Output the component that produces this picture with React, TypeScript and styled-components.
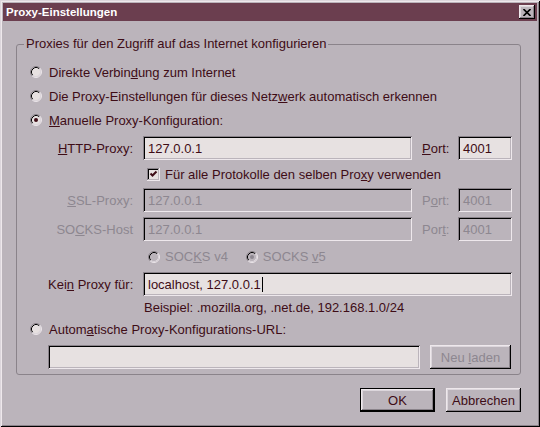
import styled, { createGlobalStyle } from "styled-components"

const FACE = "#bbb4bb"
const LIGHT = "#dcd6dc"
const HIGHLIGHT = "#eee8ec"
const SHADOW = "#8a838a"
const DARK = "#000"
const TEXT = "#3e0c16"
const DISABLED = "#8d8790"
const FIELD = "#e7e1e1"

const GlobalStyle = createGlobalStyle`
  html, body {
    margin: 0;
    padding: 0;
    background: ${FACE};
  }
  body {
    font-family: "Liberation Sans", Arial, sans-serif;
    font-size: 13px;
    color: ${TEXT};
  }
`

const Window = styled.div`
  width: 540px;
  height: 427px;
  box-sizing: border-box;
  padding: 3px;
  background: ${FACE};
  display: flex;
  flex-direction: column;
  box-shadow: inset 1px 1px ${LIGHT}, inset -1px -1px ${DARK},
    inset 2px 2px ${HIGHLIGHT}, inset -2px -2px ${SHADOW};
`

const TitleBar = styled.div`
  height: 18px;
  background: #6b3e4f;
  display: flex;
  align-items: center;
  justify-content: space-between;
  padding: 0 2px 0 3px;
`

const TitleText = styled.span`
  color: #fff;
  font-weight: bold;
  font-size: 11.5px;
`

const CloseButton = styled.div`
  width: 16px;
  height: 14px;
  box-sizing: border-box;
  background: ${FACE};
  display: flex;
  align-items: center;
  justify-content: center;
  box-shadow: inset -1px -1px ${DARK}, inset 1px 1px ${HIGHLIGHT},
    inset -2px -2px ${SHADOW}, inset 2px 2px ${LIGHT};
`

const Body = styled.div`
  flex: 1;
  padding: 15px 16px 0 13px;
  display: flex;
  flex-direction: column;
`

const Group = styled.fieldset`
  margin: 0;
  padding: 0 0 5px 0;
  min-width: 0;
  border: 1px solid ${SHADOW};
  border-radius: 3px;
`

const Legend = styled.legend`
  margin-left: 7px;
  padding: 0 2px;
  line-height: 16px;
`

const RadioRow = styled.div<{ $h: number; $top?: number }>`
  display: flex;
  align-items: center;
  gap: 7px;
  height: ${p => p.$h}px;
  margin-top: ${p => p.$top ?? 0}px;
  padding-left: 13px;
`

const Settings = styled.div`
  margin-left: 31px;
  margin-top: 4px;
  display: flex;
  flex-direction: column;
`

const FieldRow = styled.div<{ $top?: number }>`
  display: grid;
  grid-template-columns: 85px 269px 26px 54px;
  column-gap: 10px;
  align-items: center;
  height: 24px;
  margin-top: ${p => p.$top ?? 0}px;
`

const Label = styled.span<{ $disabled?: boolean; $right?: boolean }>`
  color: ${p => (p.$disabled ? DISABLED : TEXT)};
  text-align: ${p => (p.$right ? "right" : "left")};
  white-space: nowrap;
`

const Key = styled.span`
  text-decoration: underline;
  text-underline-offset: 1px;
`

const TextBox = styled.div<{ $disabled?: boolean; $span?: boolean }>`
  height: 24px;
  box-sizing: border-box;
  padding: 0 5px;
  display: flex;
  align-items: center;
  white-space: nowrap;
  background: ${p => (p.$disabled ? FACE : FIELD)};
  color: ${p => (p.$disabled ? DISABLED : TEXT)};
  grid-column: ${p => (p.$span ? "2 / 5" : "auto")};
  box-shadow: inset 1px 1px ${SHADOW}, inset -1px -1px ${HIGHLIGHT},
    inset 2px 2px ${DARK}, inset -2px -2px ${FACE};
`

const Caret = styled.span`
  display: inline-block;
  width: 1px;
  height: 15px;
  background: ${DARK};
  margin-left: 1px;
`

const IndentRow = styled.div<{ $h: number; $indent: number; $gap?: number }>`
  display: flex;
  align-items: center;
  height: ${p => p.$h}px;
  padding-left: ${p => p.$indent}px;
  gap: ${p => p.$gap ?? 5}px;
`

const Option = styled.label`
  display: flex;
  align-items: center;
  gap: 5px;
`

const UrlRow = styled.div`
  display: flex;
  gap: 10px;
  margin-top: 5px;
  padding-left: 31px;
`

const UrlBox = styled(TextBox)`
  width: 372px;
`

const Button = styled.div<{ $w: number; $default?: boolean; $disabled?: boolean }>`
  width: ${p => p.$w}px;
  height: 24px;
  box-sizing: border-box;
  background: ${FACE};
  display: flex;
  align-items: center;
  justify-content: center;
  color: ${p => (p.$disabled ? DISABLED : TEXT)};
  border: ${p => (p.$default ? `1px solid ${DARK}` : "none")};
  box-shadow: inset -1px -1px ${DARK}, inset 1px 1px ${HIGHLIGHT},
    inset -2px -2px ${SHADOW}, inset 2px 2px ${LIGHT};
`

const ButtonBar = styled.div`
  display: flex;
  justify-content: flex-end;
  gap: 11px;
  margin-top: 13px;
`

const Radio = ({ checked, disabled }: { checked?: boolean; disabled?: boolean }) => (
  <svg width="12" height="12" viewBox="0 0 12 12">
    <circle cx="6" cy="6" r="5" fill={disabled ? FACE : FIELD} />
    <path d="M2.11 9.89 A5.5 5.5 0 0 1 9.89 2.11" fill="none" stroke={SHADOW} />
    <path d="M9.89 2.11 A5.5 5.5 0 0 1 2.11 9.89" fill="none" stroke={HIGHLIGHT} />
    <path d="M2.82 9.18 A4.5 4.5 0 0 1 9.18 2.82" fill="none" stroke={DARK} />
    <path d="M9.18 2.82 A4.5 4.5 0 0 1 2.82 9.18" fill="none" stroke={LIGHT} />
    {checked && <circle cx="6" cy="6" r="2" fill={disabled ? DISABLED : TEXT} />}
  </svg>
)

const Checkbox = () => (
  <svg width="13" height="13" viewBox="0 0 13 13">
    <rect x="0" y="0" width="13" height="13" fill={HIGHLIGHT} />
    <rect x="0" y="0" width="12" height="12" fill={SHADOW} />
    <rect x="1" y="1" width="11" height="11" fill={FACE} />
    <rect x="1" y="1" width="10" height="10" fill={DARK} />
    <rect x="2" y="2" width="9" height="9" fill={FIELD} />
    <path d="M3.5 5.5 L5.5 7.5 L9.5 3.5" fill="none" stroke={TEXT} strokeWidth="2" />
  </svg>
)

const CloseIcon = () => (
  <svg width="8" height="7" viewBox="0 0 8 7">
    <path d="M0.5 0 L7.5 7 M7.5 0 L0.5 7" stroke="#000" strokeWidth="1.6" />
  </svg>
)

export default function App() {
  return (
    <>
      <GlobalStyle />
      <Window>
        <TitleBar>
          <TitleText>Proxy-Einstellungen</TitleText>
          <CloseButton>
            <CloseIcon />
          </CloseButton>
        </TitleBar>
        <Body>
          <Group>
            <Legend>Proxies für den Zugriff auf das Internet konfigurieren</Legend>
            <RadioRow $h={24} $top={8}>
              <Radio />
              <Label>
                Direkte Verbin<Key>d</Key>ung zum Internet
              </Label>
            </RadioRow>
            <RadioRow $h={24}>
              <Radio />
              <Label>
                Die Proxy-Einstellungen für dieses Netz<Key>w</Key>erk automatisch erkennen
              </Label>
            </RadioRow>
            <RadioRow $h={24}>
              <Radio checked />
              <Label>
                <Key>M</Key>anuelle Proxy-Konfiguration:
              </Label>
            </RadioRow>

            <Settings>
              <FieldRow>
                <Label $right>
                  <Key>H</Key>TTP-Proxy:
                </Label>
                <TextBox>127.0.0.1</TextBox>
                <Label>
                  <Key>P</Key>ort:
                </Label>
                <TextBox>4001</TextBox>
              </FieldRow>

              <IndentRow $h={28} $indent={99}>
                <Checkbox />
                <Label>
                  Für alle Protokolle den selben Pro<Key>x</Key>y verwenden
                </Label>
              </IndentRow>

              <FieldRow>
                <Label $right $disabled>
                  <Key>S</Key>SL-Proxy:
                </Label>
                <TextBox $disabled>127.0.0.1</TextBox>
                <Label $disabled>
                  P<Key>o</Key>rt:
                </Label>
                <TextBox $disabled>4001</TextBox>
              </FieldRow>

              <FieldRow $top={5}>
                <Label $right $disabled>
                  SO<Key>C</Key>KS-Host
                </Label>
                <TextBox $disabled>127.0.0.1</TextBox>
                <Label $disabled>
                  Por<Key>t</Key>:
                </Label>
                <TextBox $disabled>4001</TextBox>
              </FieldRow>

              <IndentRow $h={31} $indent={100} $gap={18}>
                <Option>
                  <Radio disabled />
                  <Label $disabled>
                    SOC<Key>K</Key>S v4
                  </Label>
                </Option>
                <Option>
                  <Radio checked disabled />
                  <Label $disabled>
                    SOCKS <Key>v</Key>5
                  </Label>
                </Option>
              </IndentRow>

              <FieldRow>
                <Label $right>
                  Kei<Key>n</Key> Proxy für:
                </Label>
                <TextBox $span>
                  <span>localhost, 127.0.0.1</span>
                  <Caret />
                </TextBox>
              </FieldRow>

              <IndentRow $h={22} $indent={96}>
                <Label>Beispiel: .mozilla.org, .net.de, 192.168.1.0/24</Label>
              </IndentRow>
            </Settings>

            <RadioRow $h={22}>
              <Radio />
              <Label>
                Autom<Key>a</Key>tische Proxy-Konfigurations-URL:
              </Label>
            </RadioRow>

            <UrlRow>
              <UrlBox />
              <Button $w={81} $disabled>
                <Label $disabled>
                  Neu <Key>l</Key>aden
                </Label>
              </Button>
            </UrlRow>
          </Group>

          <ButtonBar>
            <Button $w={75} $default>
              <Label>OK</Label>
            </Button>
            <Button $w={75}>
              <Label>Abbrechen</Label>
            </Button>
          </ButtonBar>
        </Body>
      </Window>
    </>
  )
}
